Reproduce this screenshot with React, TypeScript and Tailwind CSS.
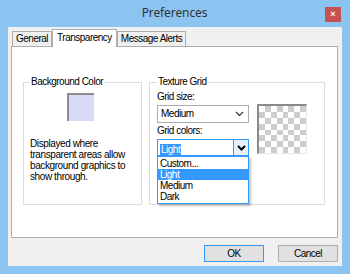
import React from 'react'

const font = { fontFamily: '"Liberation Sans", Arial, sans-serif' }

function Tab({ label, active }: { label: string; active?: boolean }) {
  if (active) {
    return (
      <div className="relative z-10 -mb-px h-[18px] border border-b-0 border-[#adadad] bg-white px-[4px] pt-[2px] text-[10px] leading-[12px] tracking-[-0.5px] text-black">
        {label}
      </div>
    )
  }
  return (
    <div className="h-[15px] border border-b-0 border-[#adadad] bg-[#f0f0f0] px-[3px] pt-[1px] text-[10px] leading-[12px] tracking-[-0.5px] text-black">
      {label}
    </div>
  )
}

function Chevron({ bold }: { bold?: boolean }) {
  return (
    <svg width="9" height="6" viewBox="0 0 9 6" className="block">
      <path
        d="M1 1 L4.5 4.5 L8 1"
        fill="none"
        stroke={bold ? '#000' : '#333'}
        strokeWidth={bold ? 2 : 1.2}
      />
    </svg>
  )
}

function Checker() {
  const cells = []
  for (let r = 0; r < 8; r++) {
    for (let c = 0; c < 8; c++) {
      cells.push(
        <div key={r * 8 + c} className={(r + c) % 2 === 0 ? 'bg-white' : 'bg-[#cdcdcd]'} />
      )
    }
  }
  return (
    <div className="grid h-[50px] w-[50px] grid-cols-8 grid-rows-8 border-l-2 border-t-2 border-r border-b border-l-[#8a8a8a] border-t-[#8a8a8a] border-r-[#e6e6e6] border-b-[#e6e6e6]">
      {cells}
    </div>
  )
}

export default function App() {
  return (
    <div className="flex h-[274px] w-[350px] flex-col bg-[#8cc4f1] px-[8px] pb-[8px] tracking-[-0.5px]" style={font}>
      {/* title bar */}
      <div className="flex h-[27px] items-start">
        <div className="flex-1 pl-[16px] pt-[5px] text-center text-[12px] leading-[16px] tracking-[-0.1px] text-[#333]" style={{ fontFamily: '"Noto Sans", sans-serif' }}>
          Preferences
        </div>
        <div className="mr-[1px] mt-[7px] flex h-[15px] w-[16px] items-center justify-center bg-[#c75050] text-[9px] font-bold leading-none tracking-normal text-white">
          ×
        </div>
      </div>

      {/* client area */}
      <div className="flex flex-1 flex-col bg-[#f0f0f0] pl-[3px] pr-[4px]">
        <div className="flex h-[19px] items-end pl-[1px] pt-[2px]">
          <Tab label="General" />
          <Tab label="Transparency" active />
          <Tab label="Message Alerts" />
        </div>

        <div className="flex h-[192px] gap-[7px] border border-[#adadad] bg-white pl-[11px] pt-[35px]">
          {/* Background Color group */}
          <div className="relative flex h-[123px] w-[119px] flex-col border border-[#dcdcdc] px-[6px]">
            <div className="-mt-[7px] self-start bg-white px-[1px] text-[10px] leading-[12px] text-black">
              Background Color
            </div>
            <div className="ml-[37px] mt-[5px] h-[28px] w-[27px] border-l-2 border-t-2 border-[#8c8c8c] bg-[#d6daf4]" />
            <div className="mt-[17px] text-[10px] leading-[11px] tracking-[-0.4px] text-black">
              Displayed where transparent areas allow background graphics to show through.
            </div>
          </div>

          {/* Texture Grid group */}
          <div className="relative flex h-[123px] w-[176px] border border-[#dcdcdc] pl-[7px]">
            <div className="flex flex-col">
              <div className="-mt-[7px] self-start bg-white px-[1px] text-[10px] leading-[12px] text-black">
                Texture Grid
              </div>
              <div className="mt-[3px] text-[10px] leading-[12px] text-black">Grid size:</div>
              <div className="mt-[2px] flex h-[18px] w-[92px] items-center border border-[#acacac] bg-white pl-[3px] pr-[4px]">
                <span className="flex-1 text-[10px] leading-[12px] text-black">Medium</span>
                <Chevron />
              </div>
              <div className="mt-[2px] text-[10px] leading-[12px] text-black">Grid colors:</div>
              <div className="relative mt-[2px]">
                <div className="flex h-[17px] w-[92px] items-center border border-[#3399ff] bg-white pl-[2px]">
                  <span className="flex-1">
                    <span className="bg-[#3399ff] px-[1px] text-[10px] leading-[12px] text-white">Light</span>
                  </span>
                  <div className="flex h-full w-[15px] items-center justify-center border-l border-[#3399ff] bg-[#e5f1fb]">
                    <Chevron bold />
                  </div>
                </div>
                <div className="absolute left-0 top-[17px] z-20 w-[92px] border border-[#3399ff] bg-white py-[1px] shadow-[2px_2px_2px_rgba(0,0,0,0.25)]">
                  <div className="h-[11px] pl-[2px] text-[10px] leading-[11px] text-black">Custom...</div>
                  <div className="h-[11px] bg-[#3399ff] pl-[2px] text-[10px] leading-[11px] text-white">Light</div>
                  <div className="h-[11px] pl-[2px] text-[10px] leading-[11px] text-black">Medium</div>
                  <div className="h-[11px] pl-[2px] text-[10px] leading-[11px] text-black">Dark</div>
                </div>
              </div>
            </div>
            <div className="ml-[8px] mt-[21px]">
              <Checker />
            </div>
          </div>
        </div>

        {/* buttons */}
        <div className="flex justify-end gap-[14px] pt-[7px]">
          <button className="h-[17px] w-[60px] border border-[#3399ff] bg-[#e1e1e1] text-[10px] leading-[12px] text-black">
            OK
          </button>
          <button className="h-[17px] w-[60px] border border-[#adadad] bg-[#e1e1e1] text-[10px] leading-[12px] text-black">
            Cancel
          </button>
        </div>
      </div>
    </div>
  )
}
